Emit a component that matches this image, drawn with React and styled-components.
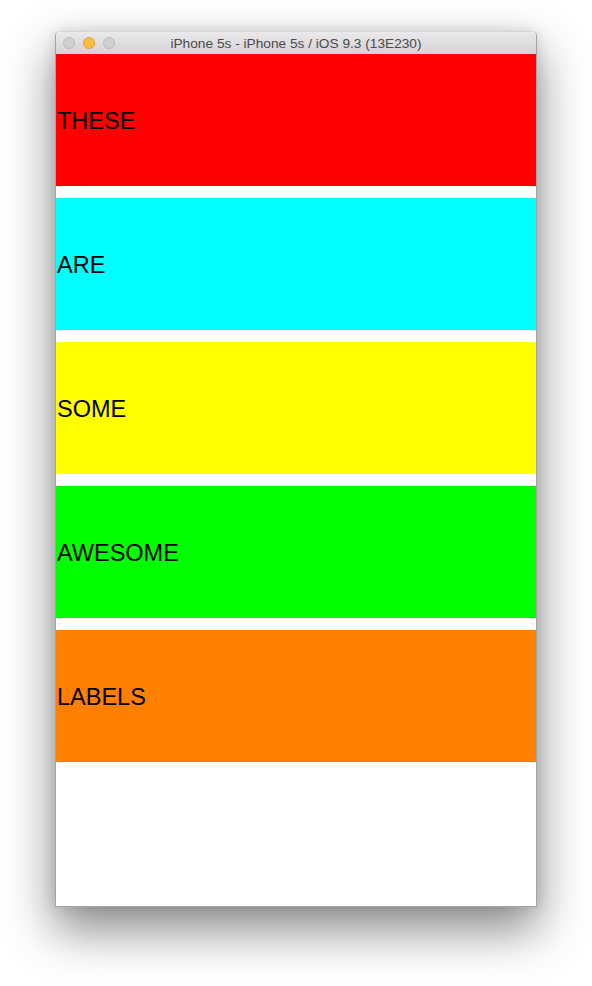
import React from "react";
import styled, { createGlobalStyle } from "styled-components";

const Global = createGlobalStyle`
  html, body { margin: 0; padding: 0; background: #ffffff; }
  body { font-family: "Liberation Sans", Arial, sans-serif; }
`;

const Stage = styled.div`
  width: 592px;
  height: 986px;
  padding: 31px 0 0 55px;
  box-sizing: border-box;
  background: #ffffff;
  overflow: hidden;
`;

const Window = styled.div`
  width: 482px;
  box-sizing: border-box;
  border: 1px solid #a4a4a4;
  border-top-color: #d6d6d6;
  border-radius: 5px 5px 0 0;
  box-shadow: 0 22px 48px 2px rgba(0, 0, 0, 0.45), 0 0 14px rgba(0, 0, 0, 0.12);
  background: #ffffff;
`;

const TitleBar = styled.div`
  position: relative;
  height: 22px;
  display: flex;
  align-items: center;
  justify-content: center;
  background: linear-gradient(#ebe9eb, #d4d2d4);
  border-radius: 4px 4px 0 0;
  font-family: "Liberation Sans", Arial, sans-serif;
  font-size: 13.7px;
  color: #4a4a4a;
`;

const Lights = styled.div`
  position: absolute;
  left: 7px;
  top: 5px;
  display: flex;
  gap: 8px;
`;

const Light = styled.span`
  width: 12px;
  height: 12px;
  box-sizing: border-box;
  border-radius: 50%;
  background: ${(p) => (p.$active ? "#fcbd41" : "#d1d0d1")};
  border: 1px solid ${(p) => (p.$active ? "#dea13a" : "#bdbcbd")};
`;

const Screen = styled.div`
  height: 852px;
  display: flex;
  flex-direction: column;
  gap: 12px;
  background: #ffffff;
`;

const Label = styled.div`
  height: 132px;
  box-sizing: border-box;
  display: flex;
  align-items: center;
  padding: 2px 0 0 1px;
  background: ${(p) => p.$bg};
  font-family: "Liberation Sans", Arial, sans-serif;
  font-size: 23.5px;
  color: #000000;
`;

const labels = [
  ["THESE", "#ff0000"],
  ["ARE", "#00ffff"],
  ["SOME", "#ffff00"],
  ["AWESOME", "#00ff00"],
  ["LABELS", "#ff8000"],
];

export default function App() {
  return (
    <>
      <Global />
      <Stage>
        <Window>
          <TitleBar>
            <Lights>
              <Light />
              <Light $active />
              <Light />
            </Lights>
            iPhone 5s - iPhone 5s / iOS 9.3 (13E230)
          </TitleBar>
          <Screen>
            {labels.map(([t, c]) => (
              <Label key={t} $bg={c}>
                {t}
              </Label>
            ))}
          </Screen>
        </Window>
      </Stage>
    </>
  );
}
